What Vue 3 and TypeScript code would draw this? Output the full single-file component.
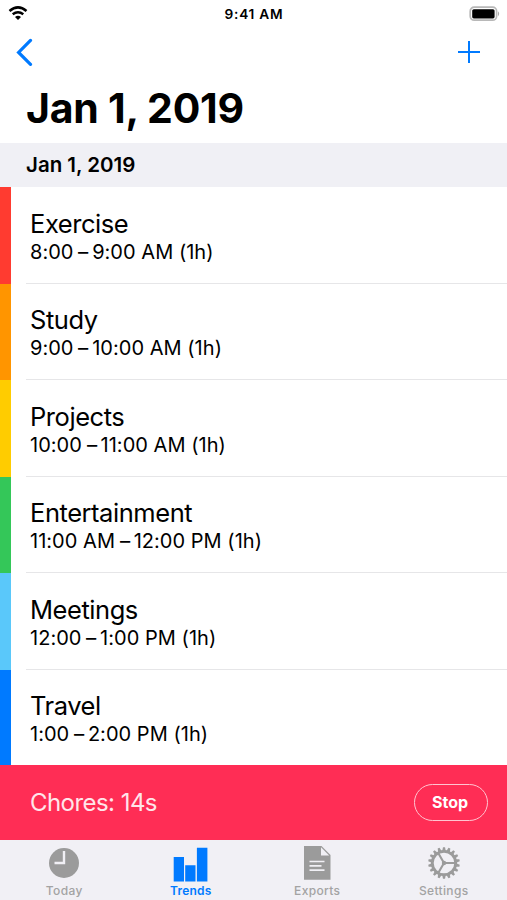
<script setup lang="ts">
interface Entry {
  name: string
  start: string
  end: string
  color: string
}

const entries: Entry[] = [
  { name: 'Exercise', start: '8:00', end: '9:00 AM (1h)', color: '#ff3b30' },
  { name: 'Study', start: '9:00', end: '10:00 AM (1h)', color: '#ff9500' },
  { name: 'Projects', start: '10:00', end: '11:00 AM (1h)', color: '#ffcc00' },
  { name: 'Entertainment', start: '11:00 AM', end: '12:00 PM (1h)', color: '#34c759' },
  { name: 'Meetings', start: '12:00', end: '1:00 PM (1h)', color: '#5ac8fa' },
  { name: 'Travel', start: '1:00', end: '2:00 PM (1h)', color: '#007aff' },
]

const teeth: number[] = Array.from({ length: 18 }, (_, i) => i * 20)
</script>

<template>
  <main class="screen">
    <header class="status">
      <svg class="wifi" width="20" height="16" viewBox="0 0 20 16" fill="none" stroke="#000">
        <path d="M1.5 5.9Q10 -1.1 18.5 5.9" stroke-width="2.6" />
        <path d="M4.7 9.3Q10 5 15.3 9.3" stroke-width="2.4" />
        <path d="M7 12.1Q10 9.6 13 12.1L10 15Z" fill="#000" stroke="none" />
      </svg>
      <span class="clock">9:41 AM</span>
      <svg class="battery" width="32" height="16" viewBox="0 0 32 16">
        <rect x="2.2" y="1.2" width="26.4" height="13" rx="4" fill="#fff" stroke="#b8b8b8" stroke-width="1.7" />
        <rect x="4.2" y="3.2" width="22.4" height="9.2" rx="1.6" />
        <path d="M30 5.2Q32.3 7.7 30 10.2Z" fill="#aaa" />
      </svg>
    </header>

    <nav class="navbar">
      <svg width="18" height="28" viewBox="0 0 18 28" fill="none" stroke="#007aff" stroke-width="3.2">
        <path d="M15.5 2.4L3.6 14.4L15.5 26.4" stroke-linecap="round" />
      </svg>
      <svg width="22" height="22" viewBox="0 0 22 22" stroke="#007aff" stroke-width="2">
        <path d="M11 0V22M0 11H22" />
      </svg>
    </nav>

    <h1 class="title">Jan 1, 2019</h1>
    <h2 class="section">Jan 1, 2019</h2>

    <ul class="list">
      <li v-for="e in entries" :key="e.name" class="row">
        <span class="stripe" :style="{ background: e.color }"></span>
        <div class="body">
          <div class="name">{{ e.name }}</div>
          <div class="time">{{ e.start }}<span class="dash">–</span>{{ e.end }}</div>
        </div>
      </li>
    </ul>

    <section class="timer">
      <span class="running">Chores: 14s</span>
      <button class="stop">Stop</button>
    </section>

    <footer class="tabs">
      <div class="tab">
        <svg width="36" height="36" viewBox="0 0 36 36">
          <circle cx="18" cy="18" r="15" fill="#9b9b9b" />
          <path d="M18 6V18H8.5" fill="none" stroke="#f1f0f5" stroke-width="2.4" />
        </svg>
        <span>Today</span>
      </div>
      <div class="tab active">
        <svg width="36" height="36" viewBox="0 0 36 36" fill="#007aff">
          <path d="M0.7 12H11V36.5H0.7ZM12.2 20.2H22.5V36.5H12.2ZM23.9 2.7H34.4V36.5H23.9Z" />
        </svg>
        <span>Trends</span>
      </div>
      <div class="tab">
        <svg width="36" height="36" viewBox="0 0 36 36">
          <path d="M5 1H22.5L31.5 10V34.7H5Z" fill="#9b9b9b" />
          <path d="M22 2.2V10.4H30.2Z" fill="#f1f0f5" />
          <path d="M10.5 16.5H25.5M10.5 20.8H22.5M10.5 25.2H25.5" stroke="#f1f0f5" stroke-width="1.7" />
        </svg>
        <span>Exports</span>
      </div>
      <div class="tab">
        <svg width="36" height="36" viewBox="0 0 36 36" stroke="#9b9b9b" fill="none">
          <circle cx="18" cy="18" r="11.7" stroke-width="2.8" />
          <path
            v-for="a in teeth"
            :key="a"
            d="M16.2 6L17 2.2H19L19.8 6Z"
            fill="#9b9b9b"
            stroke="none"
            :transform="`rotate(${a} 18 18)`"
          />
          <path d="M18 18H29M18 18L12.5 8.5M18 18L12.5 27.5" stroke-width="2.1" />
          <circle cx="18" cy="18" r="2.2" fill="#9b9b9b" stroke="none" />
        </svg>
        <span>Settings</span>
      </div>
    </footer>
  </main>
</template>

<style>
body {
  margin: 0;
  background: #fff;
}
</style>

<style scoped>
.screen {
  width: 507px;
  height: 900px;
  display: flex;
  flex-direction: column;
  overflow: hidden;
  background: #fff;
  color: #000;
  font-family: Inter, 'Liberation Sans', sans-serif;
}
.status {
  height: 28px;
  box-sizing: border-box;
  padding: 0 7px 0 8px;
  display: grid;
  grid-template-columns: 1fr auto 1fr;
  align-items: center;
}
.wifi {
  margin-top: -2px;
}
.battery {
  justify-self: end;
  margin-top: -1px;
}
.clock {
  font-size: 13.7px;
  font-weight: 600;
  letter-spacing: 0.75px;
}
.navbar {
  height: 48px;
  box-sizing: border-box;
  padding: 0 27px 0 15px;
  display: flex;
  justify-content: space-between;
  align-items: center;
}
.title {
  margin: 0;
  height: 67px;
  padding-left: 26px;
  font-size: 41px;
  line-height: 65px;
  font-weight: 700;
  letter-spacing: -0.25px;
}
.section {
  margin: 0;
  height: 44px;
  padding-left: 26px;
  background: #f0f0f5;
  font-size: 20.5px;
  line-height: 44px;
  font-weight: 600;
}
.list {
  flex: none;
  margin: 0;
  padding: 0;
  height: 578px;
  list-style: none;
  display: grid;
  grid-template-rows: repeat(6, 96.5px);
  overflow: hidden;
}
.row {
  display: flex;
  gap: 15px;
}
.stripe {
  width: 11px;
}
.body {
  flex: 1;
  box-sizing: border-box;
  padding: 19.5px 0 0 4px;
  border-bottom: 1px solid #e6e6e8;
}
.row:last-child .body {
  border-bottom: 0;
}
.name {
  font-size: 25.5px;
  line-height: 33px;
  letter-spacing: -0.45px;
}
.time {
  font-size: 20px;
  line-height: 24px;
  letter-spacing: 0.03px;
}
.dash {
  display: inline-block;
  margin: 0 4px 0 4.6px;
  transform: scaleX(1.02);
}
.timer {
  flex: none;
  height: 75px;
  box-sizing: border-box;
  padding: 0 19px 0 30px;
  display: flex;
  justify-content: space-between;
  align-items: center;
  background: #ff2d55;
  color: #fff;
}
.running {
  font-size: 24px;
  letter-spacing: -0.55px;
  color: #ffe5ea;
}
.stop {
  width: 74px;
  height: 37px;
  padding: 0 2px 2px 0;
  border: 1.5px solid #ffc4d0;
  border-radius: 19px;
  background: transparent;
  color: #fff;
  font: 700 16px Inter, 'Liberation Sans', sans-serif;
}
.tabs {
  flex: none;
  height: 60px;
  padding-left: 1px;
  display: grid;
  grid-template-columns: repeat(4, 126.5px);
  background: #f1f0f5;
}
.tab {
  padding-top: 5px;
  display: flex;
  flex-direction: column;
  align-items: center;
  font-size: 12px;
  line-height: 20px;
  font-weight: 500;
  letter-spacing: 0.35px;
  color: #a3a3a3;
}
.tab svg {
  flex: none;
  overflow: visible;
}
.tab.active {
  color: #007aff;
  font-weight: 600;
  letter-spacing: 0.2px;
}
</style>
